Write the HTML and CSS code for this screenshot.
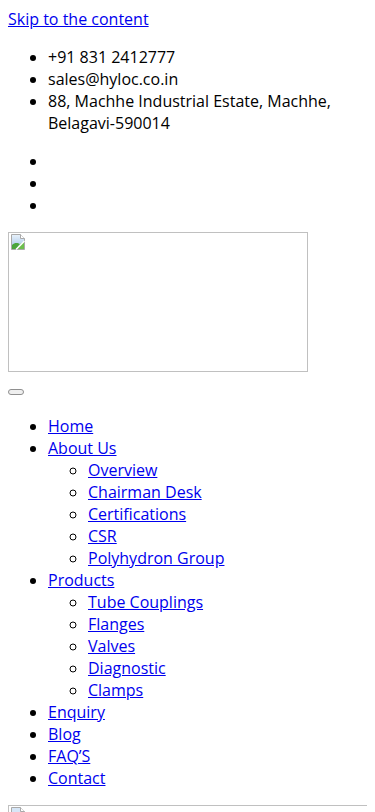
FILE: index.html
```html
<!DOCTYPE html>
<html lang="en">
<head>
    <meta charset="UTF-8">
    <meta name="viewport" content="width=device-width, initial-scale=1.0">
    <title>Hyloc</title>
    <link rel="stylesheet" href="styles.css">
</head>
<body>
    <a class="skip-link" href="#content">Skip to the content</a>

    <ul class="top-contact">
        <li>+91 831 2412777</li>
        <li>sales@hyloc.co.in</li>
        <li>88, Machhe Industrial Estate, Machhe, Belagavi-590014</li>
    </ul>

    <ul class="top-social">
        <li></li>
        <li></li>
        <li></li>
    </ul>

    <div class="site-logo">
        <a href="#" class="broken-img logo-img">
            <svg class="broken-icon" width="16" height="16" viewBox="0 0 16 16">
                <defs>
                    <linearGradient id="sky" x1="0" y1="0" x2="0" y2="1">
                        <stop offset="0" stop-color="#e9f2fb"/>
                        <stop offset="1" stop-color="#9cc0e6"/>
                    </linearGradient>
                </defs>
                <path d="M1.5 0.5h9l4 4v11h-13z" fill="url(#sky)" stroke="#a9a9a9"/>
                <path d="M10.5 0.5v4h4" fill="#fff" stroke="#a9a9a9"/>
                <path d="M2 15v-4c3-3 6-2 8-1l-4 5z" fill="#4aa53c"/>
                <path d="M10 10l4 -2v7h-7z" fill="#6cbf4c"/>
                <path d="M6 15.5l8.5-8.5" stroke="#fff" stroke-width="1.5"/>
            </svg>
        </a>
    </div>

    <div class="menu-toggle-wrap">
        <button class="menu-toggle" type="button"></button>
    </div>

    <ul class="main-menu">
        <li><a href="#">Home</a></li>
        <li><a href="#">About Us</a>
            <ul>
                <li><a href="#">Overview</a></li>
                <li><a href="#">Chairman Desk</a></li>
                <li><a href="#">Certifications</a></li>
                <li><a href="#">CSR</a></li>
                <li><a href="#">Polyhydron Group</a></li>
            </ul>
        </li>
        <li><a href="#">Products</a>
            <ul>
                <li><a href="#">Tube Couplings</a></li>
                <li><a href="#">Flanges</a></li>
                <li><a href="#">Valves</a></li>
                <li><a href="#">Diagnostic</a></li>
                <li><a href="#">Clamps</a></li>
            </ul>
        </li>
        <li><a href="#">Enquiry</a></li>
        <li><a href="#">Blog</a></li>
        <li><a href="#">FAQ’S</a></li>
        <li><a href="#">Contact</a></li>
    </ul>

    <div class="banner" id="content">
        <span class="broken-img banner-img">
            <svg class="broken-icon" width="16" height="16" viewBox="0 0 16 16">
                <path d="M1.5 0.5h9l4 4v11h-13z" fill="#d6e6f7" stroke="#a9a9a9"/>
                <path d="M10.5 0.5v4h4" fill="#fff" stroke="#a9a9a9"/>
            </svg>
        </span>
    </div>
</body>
</html>
```

FILE: styles.css
```css
body {
    margin: 8px;
    font-family: 'Open Sans', sans-serif;
    font-size: 16px;
    color: #000;
    background: #fff;
}

a {
    color: #0000ee;
}

ul {
    margin: 16px 0;
    padding-left: 40px;
}

ul ul {
    margin: 0;
    list-style-type: circle;
}

.top-social li {
    height: 22px;
}

.broken-img {
    display: inline-block;
    box-sizing: border-box;
    border: 1px solid #c0c0c0;
    vertical-align: baseline;
    position: relative;
}

.broken-icon {
    position: absolute;
    top: 1px;
    left: 1px;
}

.logo-img {
    width: 300px;
    height: 140px;
}

.menu-toggle {
    display: inline-block;
    width: 16px;
    height: 6px;
    padding: 0;
    border: 1px solid #8f8f8f;
    border-radius: 3px;
    background: #efefef;
    vertical-align: baseline;
}

.main-menu {
    margin-bottom: 16px;
}

.banner {
    height: 60px;
    overflow: hidden;
}

.banner-img {
    width: 400px;
    height: 60px;
}
```
